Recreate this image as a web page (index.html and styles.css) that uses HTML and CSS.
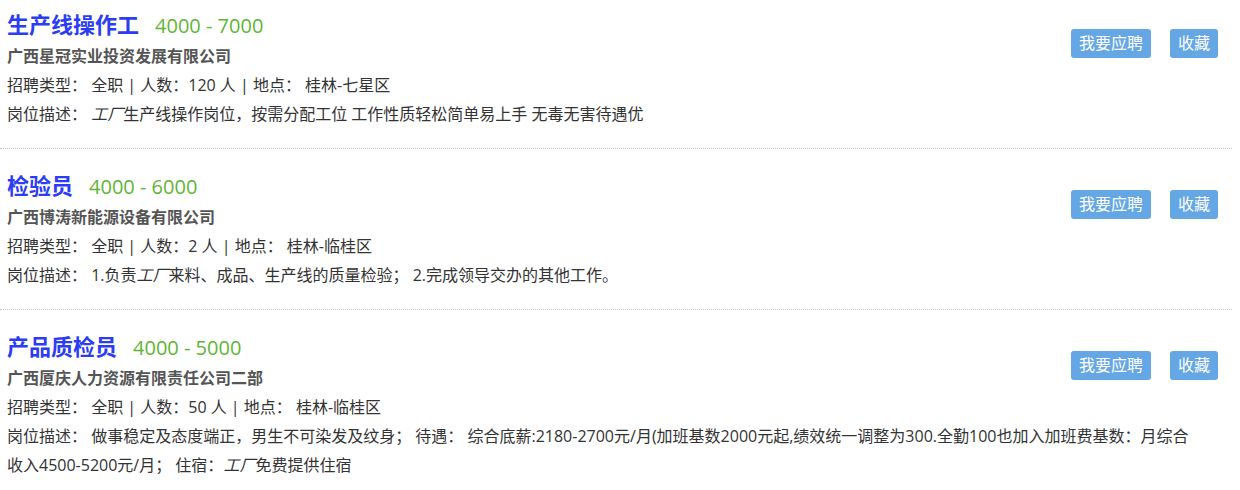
FILE: index.html
```html
<!DOCTYPE html>
<html lang="zh-CN">
<head>
<meta charset="UTF-8">
<title>职位列表</title>
<link rel="stylesheet" href="styles.css">
</head>
<body>
<div class="job-list">
  <div class="job-item">
    <div class="actions">
      <a class="btn">我要应聘</a>
      <a class="btn">收藏</a>
    </div>
    <div class="job-title">生产线操作工<span class="salary">4000 - 7000</span></div>
    <div class="company">广西星冠实业投资发展有限公司</div>
    <div class="row">招聘类型： 全职 | 人数：120 人 | 地点： 桂林-七星区</div>
    <div class="row">岗位描述： <em>工厂</em>生产线操作岗位，按需分配工位 工作性质轻松简单易上手 无毒无害待遇优</div>
  </div>
  <div class="job-item">
    <div class="actions">
      <a class="btn">我要应聘</a>
      <a class="btn">收藏</a>
    </div>
    <div class="job-title">检验员<span class="salary">4000 - 6000</span></div>
    <div class="company">广西博涛新能源设备有限公司</div>
    <div class="row">招聘类型： 全职 | 人数：2 人 | 地点： 桂林-临桂区</div>
    <div class="row">岗位描述： 1.负责<em>工厂</em>来料、成品、生产线的质量检验； 2.完成领导交办的其他工作。</div>
  </div>
  <div class="job-item">
    <div class="actions">
      <a class="btn">我要应聘</a>
      <a class="btn">收藏</a>
    </div>
    <div class="job-title">产品质检员<span class="salary">4000 - 5000</span></div>
    <div class="company">广西厦庆人力资源有限责任公司二部</div>
    <div class="row">招聘类型： 全职 | 人数：50 人 | 地点： 桂林-临桂区</div>
    <div class="row">岗位描述： 做事稳定及态度端正，男生不可染发及纹身； 待遇： 综合底薪:2180-2700元/月(加班基数2000元起,绩效统一调整为300.全勤100也加入加班费基数：月综合收入4500-5200元/月； 住宿：<em>工厂</em>免费提供住宿</div>
  </div>
</div>
</body>
</html>
```

FILE: styles.css
```css
body {
  margin: 0;
  font-family: "Open Sans", "Noto Sans CJK SC", sans-serif;
  color: #333;
  background: #fff;
  overflow: hidden;
}
.job-list {
  width: 1232px;
  margin-top: -12px;
}
.job-item {
  padding: 21px 14px 19px 7px;
  border-bottom: 1px dotted #c4c4c4;
}
.job-title {
  font-size: 22px;
  font-weight: bold;
  line-height: 30px;
  height: 30px;
  margin-bottom: 3px;
  color: #2b3cf4;
}
.salary {
  margin-left: 16px;
  font-size: 20px;
  font-weight: normal;
  line-height: 1;
  color: #5fb536;
}
.company {
  font-size: 16px;
  font-weight: bold;
  line-height: 29px;
  height: 29px;
  color: #555;
}
.row {
  font-size: 16px;
  line-height: 29px;
  padding-right: 14px;
}
.row em {
  font-style: italic;
}
.actions {
  float: right;
  display: flex;
  gap: 19px;
  margin-top: 20px;
}
.btn {
  display: block;
  height: 29px;
  line-height: 29px;
  padding: 0 8px;
  font-size: 16px;
  color: #fff;
  background: #65a6e4;
  border-radius: 3px;
}
```
